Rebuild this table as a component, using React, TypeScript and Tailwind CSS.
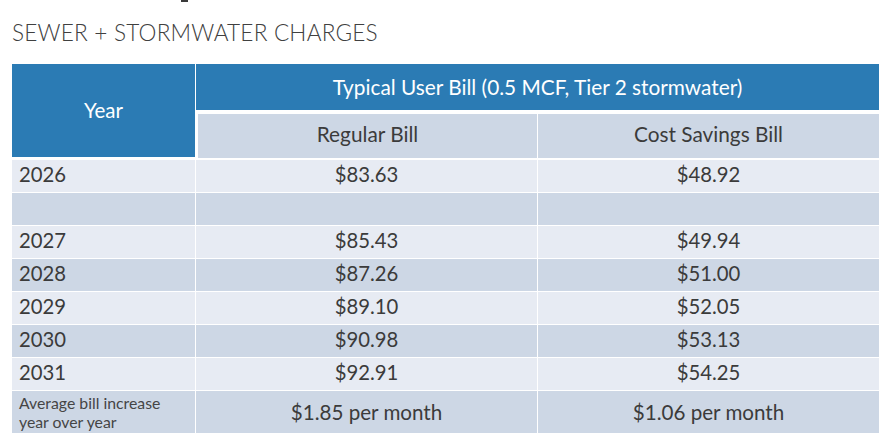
import React from "react";

const rows: { year: string; a: string; b: string }[] = [
  { year: "2026", a: "$83.63", b: "$48.92" },
  { year: "", a: "", b: "" },
  { year: "2027", a: "$85.43", b: "$49.94" },
  { year: "2028", a: "$87.26", b: "$51.00" },
  { year: "2029", a: "$89.10", b: "$52.05" },
  { year: "2030", a: "$90.98", b: "$53.13" },
  { year: "2031", a: "$92.91", b: "$54.25" },
];

export default function App() {
  return (
    <div
      className="w-[891px] h-[448px] bg-white overflow-hidden text-[#3b3b3b]"
      style={{ fontFamily: "Lato, 'Open Sans', sans-serif" }}
    >
      <div className="ml-[181px] h-[2px] w-[7px] bg-[#3a3a3a]" />
      <div className="ml-3 mt-[17px] h-[28px] text-[22.6px] leading-[28px] font-light tracking-[0.2px] text-[#404040]">
        SEWER + STORMWATER CHARGES
      </div>
      <div className="ml-3 mt-[17px] w-[867px]">
        <div className="flex h-[96px] items-start">
          <div className="w-[183px] h-[93px] bg-[#2b7bb4] text-white text-[20.5px] flex items-center justify-center">
            Year
          </div>
          <div className="w-[684px] flex flex-col">
            <div className="ml-px h-[46px] bg-[#2b7bb4] text-white text-[20.8px] flex items-center justify-center">
              Typical User Bill (0.5 MCF, Tier 2 stormwater)
            </div>
            <div className="mt-[4px] h-[44px] flex gap-px">
              <div className="ml-[3px] w-[339px] bg-[#cdd7e5] text-[20.8px] flex items-center justify-center pb-[4px]">
                Regular Bill
              </div>
              <div className="w-[341px] bg-[#cdd7e5] text-[20.8px] flex items-center justify-center pb-[4px]">
                Cost Savings Bill
              </div>
            </div>
          </div>
        </div>
        <div className="flex flex-col gap-px">
          {rows.map((r, i) => {
            const bg = i % 2 === 0 ? "bg-[#e7ebf3]" : "bg-[#cdd7e5]";
            return (
              <div key={i} className="flex gap-px h-[32px] text-[20.3px] leading-[24px]">
                <div className={`w-[183px] ${bg} flex items-center pl-[7px] pb-[4px]`}>{r.year}</div>
                <div className={`w-[341px] ${bg} flex items-center justify-center pb-[4px]`}>{r.a}</div>
                <div className={`w-[341px] ${bg} flex items-center justify-center pb-[4px]`}>{r.b}</div>
              </div>
            );
          })}
          <div className="flex gap-px h-[42px]">
            <div className="w-[183px] bg-[#cdd7e5] flex items-center pl-[7px] text-[#454545]">
              <p className="text-[15.8px] leading-[19px]">
                Average bill increase
                <br />
                year over year
              </p>
            </div>
            <div className="w-[341px] bg-[#cdd7e5] flex items-center justify-center text-[20.6px]">
              $1.85 per month
            </div>
            <div className="w-[341px] bg-[#cdd7e5] flex items-center justify-center text-[20.6px]">
              $1.06 per month
            </div>
          </div>
        </div>
      </div>
    </div>
  );
}
